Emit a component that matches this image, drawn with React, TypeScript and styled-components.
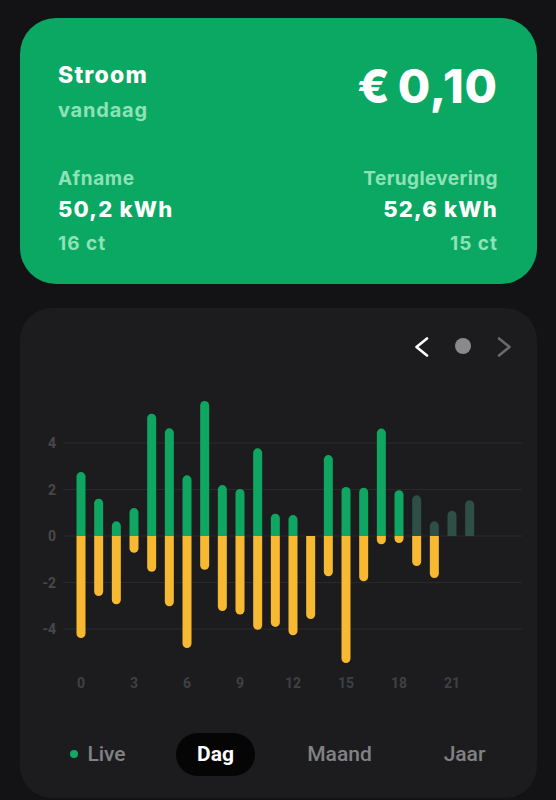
import React from "react";
import styled, { createGlobalStyle } from "styled-components";

const Global = createGlobalStyle`
  html, body { margin: 0; padding: 0; background: #131315; }
  body { font-family: "Inter", "Liberation Sans", sans-serif; -webkit-font-smoothing: antialiased; }
  * { box-sizing: border-box; }
`;

const Page = styled.div`
  width: 556px;
  height: 800px;
  padding: 18px 19px 0 20px;
  display: flex;
  flex-direction: column;
  gap: 24px;
  overflow: hidden;
`;

const SummaryCard = styled.section`
  height: 266px;
  border-radius: 36px;
  background: #0aa862;
  padding: 42px 40px 0 38px;
  display: flex;
  flex-direction: column;
  justify-content: flex-start;
`;

const Row = styled.div<{ $mt?: number }>`
  display: flex;
  justify-content: space-between;
  align-items: flex-start;
  margin-top: ${(p) => p.$mt ?? 0}px;
`;

const Col = styled.div<{ $right?: boolean }>`
  display: flex;
  flex-direction: column;
  align-items: ${(p) => (p.$right ? "flex-end" : "flex-start")};
  margin-right: ${(p) => (p.$right ? -1 : 0)}px;
`;

const Title = styled.div`
  font-size: 23px;
  font-weight: 800;
  color: #ffffff;
  line-height: 30px;
  letter-spacing: 1.2px;
`;

const Sub = styled.div<{ $size?: number; $ls?: number; $mt?: number }>`
  font-size: ${(p) => p.$size ?? 20}px;
  font-weight: 700;
  color: #8fe2b7;
  line-height: 28px;
  letter-spacing: ${(p) => p.$ls ?? 0.6}px;
  margin-top: ${(p) => p.$mt ?? 0}px;
`;

const Amount = styled.div`
  font-size: 47px;
  font-weight: 800;
  color: #ffffff;
  line-height: 50px;
  letter-spacing: 0.9px;
  word-spacing: -4px;
  margin-top: 1px;
  margin-right: -1px;
`;

const Value = styled.div`
  font-size: 22px;
  font-weight: 800;
  color: #ffffff;
  line-height: 32px;
  letter-spacing: 1.2px;
`;

const ChartPanel = styled.section`
  height: 490px;
  border-radius: 32px;
  background: #1c1c1e;
  display: flex;
  flex-direction: column;
`;

const NavRow = styled.div`
  height: 72px;
  padding: 29px 26px 0 0;
  display: flex;
  justify-content: flex-end;
  align-items: flex-start;
  gap: 26px;
`;

const NavDot = styled.div`
  width: 16px;
  height: 16px;
  margin-top: 1px;
  border-radius: 50%;
  background: #8a8a8c;
`;

const ChartSvg = styled.svg`
  display: block;
  width: 517px;
  height: 330px;
  flex: none;
`;

const TabsRow = styled.div`
  height: 88px;
  padding-left: 20px;
  display: grid;
  grid-template-columns: 116px 119px 129px 121px;
  align-items: center;
  justify-items: center;
`;

const Tab = styled.div<{ $active?: boolean }>`
  height: 43px;
  padding: 0 ${(p) => (p.$active ? 21 : 0)}px;
  border-radius: 22px;
  background: ${(p) => (p.$active ? "#050505" : "transparent")};
  display: flex;
  align-items: center;
  gap: 9px;
  font-family: "Roboto", "Liberation Sans", sans-serif;
  font-size: 21px;
  font-weight: ${(p) => (p.$active ? 700 : 500)};
  color: ${(p) => (p.$active ? "#ffffff" : "#828284")};
`;

const LiveDot = styled.span`
  width: 8px;
  height: 8px;
  border-radius: 50%;
  background: #12a865;
`;

const Chevron = ({ dir, color }: { dir: "left" | "right"; color: string }) => (
  <svg width="14" height="20" viewBox="0 0 14 20">
    <polyline
      points={dir === "left" ? "12,1.5 1.5,10 12,18.5" : "2,1.5 12.5,10 2,18.5"}
      fill="none"
      stroke={color}
      strokeWidth="2.6"
      strokeLinecap="round"
      strokeLinejoin="round"
    />
  </svg>
);

const afname = [2.75, 1.6, 0.63, 1.2, 5.26, 4.63, 2.61, 5.81, 2.19, 2.02, 3.77, 0.96, 0.9, 0, 3.48, 2.11, 2.08, 4.62, 1.97, 1.75, 0.63, 1.09, 1.54];
const terug = [4.39, 2.58, 2.94, 0.72, 1.54, 3.02, 4.82, 1.45, 3.23, 3.38, 4.03, 3.91, 4.27, 3.57, 1.73, 5.46, 1.95, 0.36, 0.3, 1.29, 1.81, 0, 0];

const ZERO = 156;
const UNIT = 23.25;
const X0 = 61;
const STEP = 17.667;
const W = 9;
const R = 4.5;

function upPath(cx: number, h: number) {
  const l = cx - W / 2;
  const r = cx + W / 2;
  const top = ZERO - h;
  const rr = Math.min(R, h);
  return `M${l},${ZERO} V${top + rr} A${R},${rr} 0 0 1 ${r},${top + rr} V${ZERO} Z`;
}
function downPath(cx: number, h: number) {
  const l = cx - W / 2;
  const r = cx + W / 2;
  const bot = ZERO + h;
  const rr = Math.min(R, h);
  return `M${l},${ZERO} V${bot - rr} A${R},${rr} 0 0 0 ${r},${bot - rr} V${ZERO} Z`;
}

const Chart = () => (
  <ChartSvg viewBox="0 0 517 330">
    {[4, 2, 0, -2, -4].map((v) => {
      const y = ZERO - v * UNIT;
      return (
        <g key={v}>
          <line x1={43} x2={502} y1={y} y2={y} stroke="#2a2a2d" strokeWidth="1" />
          <text
            x={36}
            y={y + 5}
            textAnchor="end"
            fontFamily="Roboto, 'Liberation Sans', sans-serif"
            fontWeight={700}
            fontSize="14"
            fill="#48484b"
          >
            {v}
          </text>
        </g>
      );
    })}
    {afname.map((v, i) => {
      const cx = X0 + i * STEP;
      const dim = i >= 19;
      return (
        <g key={i}>
          {terug[i] > 0 && <path d={downPath(cx, terug[i] * UNIT)} fill="#f6b931" />}
          {v > 0 && <path d={upPath(cx, v * UNIT)} fill={dim ? "#2f4e45" : "#0fa661"} />}
        </g>
      );
    })}
    {[0, 3, 6, 9, 12, 15, 18, 21].map((h) => (
      <text
        key={h}
        x={X0 + h * STEP}
        y={308}
        textAnchor="middle"
        fontFamily="Roboto, 'Liberation Sans', sans-serif"
        fontWeight={700}
        fontSize="14"
        fill="#404043"
      >
        {h}
      </text>
    ))}
  </ChartSvg>
);

export default function App() {
  return (
    <>
      <Global />
      <Page>
        <SummaryCard>
          <Row>
            <Col>
              <Title>Stroom</Title>
              <Sub $size={20} $ls={0.8} $mt={6}>vandaag</Sub>
            </Col>
            <Amount>€ 0,10</Amount>
          </Row>
          <Row $mt={41}>
            <Col>
              <Sub $size={19} $ls={0.6}>Afname</Sub>
              <Value>50,2 kWh</Value>
              <Sub $size={19} $ls={1} $mt={5}>16 ct</Sub>
            </Col>
            <Col $right>
              <Sub $size={19} $ls={0.4}>Teruglevering</Sub>
              <Value>52,6 kWh</Value>
              <Sub $size={19} $ls={1} $mt={5}>15 ct</Sub>
            </Col>
          </Row>
        </SummaryCard>
        <ChartPanel>
          <NavRow>
            <Chevron dir="left" color="#ffffff" />
            <NavDot />
            <Chevron dir="right" color="#6a6a6c" />
          </NavRow>
          <Chart />
          <TabsRow>
            <Tab>
              <LiveDot />
              Live
            </Tab>
            <Tab $active>Dag</Tab>
            <Tab>Maand</Tab>
            <Tab>Jaar</Tab>
          </TabsRow>
        </ChartPanel>
      </Page>
    </>
  );
}
